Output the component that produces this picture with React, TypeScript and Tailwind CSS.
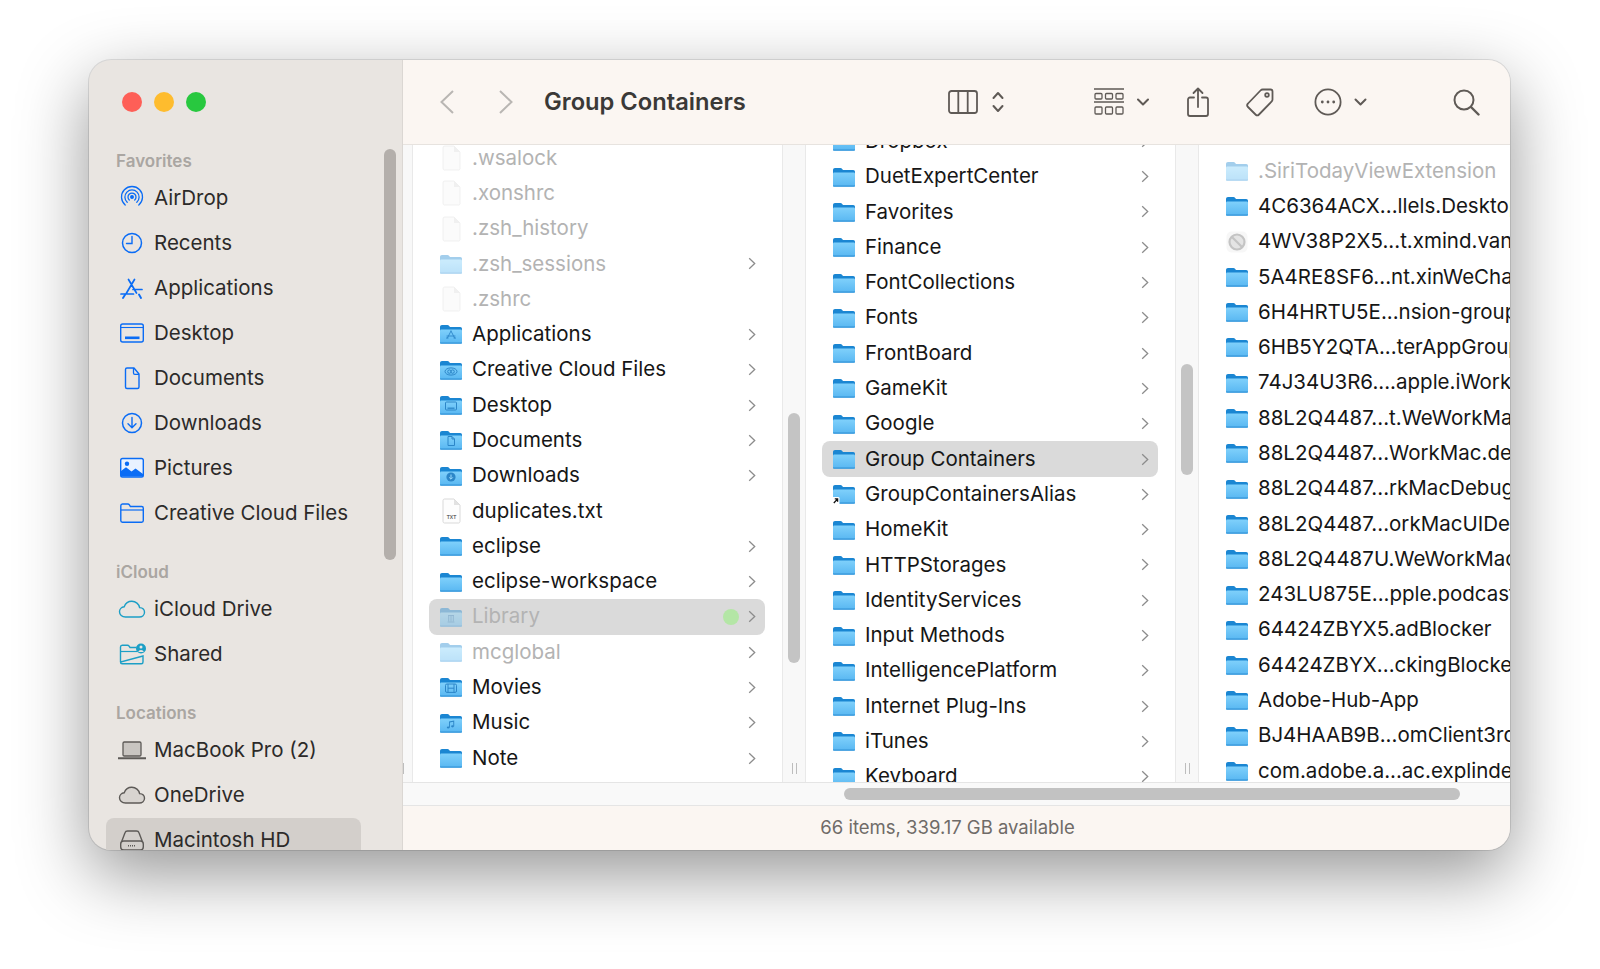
import React, { useId } from "react";

const FONT = "font-['Inter','Liberation_Sans',sans-serif]";

type G = "app" | "cc" | "desk" | "doc" | "down" | "lib" | "film" | "music" | "alias" | undefined;

function Glyph({ g }: { g: G }) {
  const c = "#2c86c8";
  if (g === "app") return <path d="M12 8l-3.6 7M12 8l3.6 7M8 13h8M7.5 15h1.6M15 15h1.6" stroke={c} strokeWidth="0.9" fill="none" strokeLinecap="round" />;
  if (g === "cc") return <g stroke={c} strokeWidth="1" fill="none"><ellipse cx="12" cy="12.5" rx="6" ry="3.6" /><circle cx="10.4" cy="12.6" r="1.7" /><circle cx="13.6" cy="12.6" r="1.7" /></g>;
  if (g === "desk") return <g stroke={c} strokeWidth="1" fill="none"><rect x="6.5" y="8" width="11" height="8" rx="1" /><path d="M8.5 14.2h7" strokeWidth="1.3" /></g>;
  if (g === "doc") return <path d="M9 7.5h4l2.5 2.5v6.5H9zM13 7.5V10h2.5" stroke={c} strokeWidth="1" fill="none" strokeLinejoin="round" />;
  if (g === "down") return <g><circle cx="12" cy="12" r="4.6" fill={c} /><path d="M12 9.5v4.4M10.2 12.4l1.8 1.8 1.8-1.8" stroke="#9adafc" strokeWidth="1" fill="none" /></g>;
  if (g === "lib") return <path d="M9 9.5h6M9.7 9.5v6M12 9.5v6M14.3 9.5v6M8.6 16h6.8" stroke={c} strokeWidth="1" fill="none" />;
  if (g === "film") return <g stroke={c} strokeWidth="1" fill="none"><rect x="6.5" y="8" width="11" height="8.4" rx="1.4" /><path d="M9 8v8.4M15 8v8.4M9 12.2h6" /></g>;
  if (g === "music") return <g fill={c}><path d="M10 9.6l5.2-1.2v5.8h-.9V9.8l-3.4.8v4.8H10z" /><ellipse cx="9.2" cy="15.5" rx="1.4" ry="1.1" /><ellipse cx="13.5" cy="14.3" rx="1.4" ry="1.1" /></g>;
  return null;
}

function Folder({ g, dim }: { g?: G; dim?: boolean }) {
  const id = useId();
  return (
    <svg width="24" height="22" viewBox="0 0 24 22" className={`shrink-0 ${dim ? "opacity-40" : ""}`}>
      <defs>
        <linearGradient id={id} x1="0" y1="0" x2="0" y2="1">
          <stop offset="0" stopColor="#7fd0fb" />
          <stop offset="1" stopColor="#5ab8f2" />
        </linearGradient>
      </defs>
      <path d="M1 4.2C1 2.9 1.8 2 3 2h5.4c.8 0 1.3.3 1.8.9L11 4h10.2C22.4 4 23 4.8 23 6v3H1z" fill="#1b86d2" />
      <rect x="1" y="5.6" width="22" height="14.9" rx="1.5" fill="#1b86d2" />
      <rect x="1" y="6.6" width="22" height="13.4" rx="1.2" fill={`url(#${id})`} />
      <rect x="1" y="19.3" width="22" height="1.4" rx="0.7" fill="#3f9fdf" />
      <Glyph g={g} />
      {g === "alias" && (
        <g>
          <rect x="0" y="14" width="7.5" height="7.5" rx="1.2" fill="#fff" />
          <path d="M1.8 20l3.4-3.6M2.8 15.9h2.8v2.8" stroke="#111" strokeWidth="1.3" fill="none" />
        </g>
      )}
    </svg>
  );
}

function FileIcon({ dim, txt }: { dim?: boolean; txt?: boolean }) {
  return (
    <svg width="24" height="26" viewBox="0 0 24 26" className="shrink-0">
      <path
        d="M4 2.5C4 1.7 4.6 1 5.5 1H15l6 6v16.5c0 .8-.6 1.5-1.5 1.5h-14C4.600 25 4 24.300 4 23.500z"
        fill={dim ? "#fbfbfb" : "#fdfdfd"}
        stroke={dim ? "#ededed" : "#cfcfcf"}
        strokeWidth="0.8"
      />
      <path d="M15 1v6h6z" fill={dim ? "#f0f0f0" : "#e2e2e2"} />
      {txt && (
        <text x="12.500" y="21" textAnchor="middle" fontSize="5" fontWeight="700" fill="#666" fontFamily="Liberation Sans">
          TXT
        </text>
      )}
    </svg>
  );
}

function Blocked() {
  return (
    <svg width="24" height="24" viewBox="0 0 24 24" className="shrink-0">
      <rect x="1.500" y="1.500" width="21" height="21" rx="5" fill="#f7f7f7" />
      <circle cx="12" cy="12" r="7.500" fill="#e4e4e4" stroke="#c4c4c4" strokeWidth="2.200" />
      <path d="M7 7l10 10" stroke="#c4c4c4" strokeWidth="2.200" />
    </svg>
  );
}

function Chevron() {
  return (
    <svg width="8" height="13" viewBox="0 0 8 13" className="shrink-0">
      <path d="M1.200 1.200L6.700 6.500 1.200 11.800" fill="none" stroke="#8c8c8c" strokeWidth="1.300" />
    </svg>
  );
}

type R = {
  n: string;
  t?: "file" | "txt" | "blocked";
  g?: G;
  dim?: boolean;
  chev?: boolean;
  sel?: boolean;
  dot?: boolean;
};

function Row({ r }: { r: R }) {
  return (
    <div
      className={`flex h-[35.3px] shrink-0 items-center rounded-[8px] pl-[10px] pr-[9px] ${r.sel ? "bg-[#dadada]" : ""}`}
    >
      <span className="flex w-[24px] shrink-0 justify-center">
        {r.t === "file" || r.t === "txt" ? <FileIcon dim={r.dim} txt={r.t === "txt"} /> : r.t === "blocked" ? <Blocked /> : <Folder g={r.g} dim={r.dim} />}
      </span>
      <span className={`ml-[9px] whitespace-nowrap text-[20.500px] ${r.dim ? "text-[#b3b3b3]" : "text-[#161616]"}`}>{r.n}</span>
      {(r.chev || r.dot) && <span className="flex-1" />}
      {r.dot && <span className="mr-[9px] h-[16px] w-[16px] rounded-full bg-[#b4e6a6]" />}
      {r.chev && <Chevron />}
    </div>
  );
}

const col1: R[] = [
  { n: ".wsalock", t: "file", dim: true },
  { n: ".xonshrc", t: "file", dim: true },
  { n: ".zsh_history", t: "file", dim: true },
  { n: ".zsh_sessions", dim: true, chev: true },
  { n: ".zshrc", t: "file", dim: true },
  { n: "Applications", g: "app", chev: true },
  { n: "Creative Cloud Files", g: "cc", chev: true },
  { n: "Desktop", g: "desk", chev: true },
  { n: "Documents", g: "doc", chev: true },
  { n: "Downloads", g: "down", chev: true },
  { n: "duplicates.txt", t: "txt" },
  { n: "eclipse", chev: true },
  { n: "eclipse-workspace", chev: true },
  { n: "Library", g: "lib", dim: true, chev: true, sel: true, dot: true },
  { n: "mcglobal", dim: true, chev: true },
  { n: "Movies", g: "film", chev: true },
  { n: "Music", g: "music", chev: true },
  { n: "Note", chev: true },
];

const col2: R[] = [
  "Dropbox",
  "DuetExpertCenter",
  "Favorites",
  "Finance",
  "FontCollections",
  "Fonts",
  "FrontBoard",
  "GameKit",
  "Google",
  "Group Containers",
  "GroupContainersAlias",
  "HomeKit",
  "HTTPStorages",
  "IdentityServices",
  "Input Methods",
  "IntelligencePlatform",
  "Internet Plug-Ins",
  "iTunes",
  "Keyboard",
].map((n) => ({ n, chev: true, sel: n === "Group Containers", g: n === "GroupContainersAlias" ? ("alias" as G) : undefined }));

const col3: R[] = [
  { n: ".SiriTodayViewExtension", dim: true },
  { n: "4C6364ACX...llels.Desktop" },
  { n: "4WV38P2X5...t.xmind.vana", t: "blocked" },
  { n: "5A4RE8SF6...nt.xinWeChat" },
  { n: "6H4HRTU5E...nsion-group" },
  { n: "6HB5Y2QTA...terAppGroup" },
  { n: "74J34U3R6....apple.iWork" },
  { n: "88L2Q4487...t.WeWorkMac" },
  { n: "88L2Q4487...WorkMac.dev" },
  { n: "88L2Q4487...rkMacDebug" },
  { n: "88L2Q4487...orkMacUIDev" },
  { n: "88L2Q4487U.WeWorkMac" },
  { n: "243LU875E...pple.podcast" },
  { n: "64424ZBYX5.adBlocker" },
  { n: "64424ZBYX...ckingBlocker" },
  { n: "Adobe-Hub-App" },
  { n: "BJ4HAAB9B...omClient3rd" },
  { n: "com.adobe.a...ac.explinder" },
];

function Handle({ one }: { one?: boolean }) {
  return (
    <div className="mb-[8px] mt-auto flex gap-[3px]">
      <span className="h-[11px] w-px bg-[#bdbdbd]" />
      {!one && <span className="h-[11px] w-px bg-[#bdbdbd]" />}
    </div>
  );
}

const B = "#0a6cf5";
const T = "#1c9fc6";
const Y = "#5d5a57";

const I = ({ children }: { children: React.ReactNode }) => (
  <svg width="28" height="28" viewBox="0 0 28 28" fill="none" className="shrink-0">
    {children}
  </svg>
);

const icons: Record<string, React.ReactNode> = {
  airdrop: (
    <I>
      <g stroke={B} strokeWidth="1.300" strokeLinecap="round">
        <circle cx="14" cy="13" r="1.300" fill={B} />
        <path d="M11.300 16a4 4 0 1 1 5.400 0" />
        <path d="M9.200 18.300a7.100 7.100 0 1 1 9.600 0" />
        <path d="M7.200 21a10.500 10.500 0 1 1 13.600 0" />
      </g>
    </I>
  ),
  recents: (
    <I>
      <circle cx="14" cy="14" r="9.500" stroke={B} strokeWidth="1.500" />
      <path d="M14 7.500V14.500H8.500" stroke={B} strokeWidth="1.400" strokeLinecap="round" />
    </I>
  ),
  apps: (
    <I>
      <path d="M11 4.500L19 18M17 4.500L9 18M3.500 19H16M15.500 14.500h9" stroke={B} strokeWidth="1.700" strokeLinecap="round" transform="translate(-0.500 1)" />
      <path d="M5 24l2.200-3.500M23 24l-2-3.500" stroke={B} strokeWidth="1.900" strokeLinecap="round" />
    </I>
  ),
  desktop: (
    <I>
      <rect x="2.700" y="5" width="22.600" height="18" rx="2" stroke={B} strokeWidth="1.400" />
      <path d="M3 8.500h22" stroke={B} strokeWidth="1.100" />
      <rect x="7" y="17.500" width="14.500" height="2.600" fill={B} />
    </I>
  ),
  docs: (
    <I>
      <path d="M7.500 5.500c0-.8.600-1.500 1.500-1.500h7l5 6v13c0 .8-.600 1.500-1.500 1.500H9c-.900 0-1.500-.700-1.500-1.500z" stroke={B} strokeWidth="1.400" strokeLinejoin="round" />
      <path d="M15.500 4v5c0 .800.500 1.300 1.300 1.300H21" stroke={B} strokeWidth="1.300" />
    </I>
  ),
  downloads: (
    <I>
      <circle cx="14" cy="14" r="9.500" stroke={B} strokeWidth="1.500" />
      <path d="M14 8.500v10M10 14.800l4 4 4-4" stroke={B} strokeWidth="1.400" strokeLinecap="round" strokeLinejoin="round" />
    </I>
  ),
  pictures: (
    <I>
      <rect x="2.700" y="4.500" width="22.600" height="18.500" rx="1.800" fill="#e9f2ff" stroke={B} strokeWidth="1.400" />
      <path d="M3 22.500v-5.500l5-3.800 5.500 4.300 4-3 7.500 5.500v2.500z" fill={B} />
      <circle cx="9" cy="9.800" r="2.200" fill={B} />
    </I>
  ),
  cc: (
    <I>
      <path d="M2.800 21.500V6.800C2.800 5.800 3.500 5 4.500 5h5.300c.7 0 1.200.300 1.600.900l1 1.600h11.300c1 0 1.600.700 1.600 1.700v12.300c0 1-.600 1.700-1.600 1.700H4.400c-1 0-1.600-.700-1.600-1.700z" stroke={B} strokeWidth="1.400" />
      <path d="M3 11h22" stroke={B} strokeWidth="1.200" />
    </I>
  ),
  icloud: (
    <I>
      <path d="M7.500 22C4 22 1.500 19.700 1.500 16.800c0-2.600 2-4.800 4.700-5C7.400 8.600 10.300 6.300 13.800 6.300c4 0 7.200 2.800 7.800 6.300 2.800.2 4.900 2.100 4.900 4.600 0 2.700-2.300 4.800-5.200 4.800z" stroke={T} strokeWidth="1.400" />
    </I>
  ),
  shared: (
    <I>
      <path d="M2.500 22V7c0-1 .700-1.800 1.700-1.800h5.300c.7 0 1.200.300 1.600.900L12 7.500h6.500M25 16v6c0 1-.600 1.800-1.600 1.800H4.200c-1 0-1.700-.800-1.700-1.800z" stroke={T} strokeWidth="1.400" />
      <path d="M2.700 11.500h16.300" stroke={T} strokeWidth="1.200" />
      <circle cx="23" cy="8.500" r="5" fill={T} />
      <circle cx="23" cy="7" r="1.500" fill="#e9e5e1" />
      <path d="M20.200 12a3 3 0 0 1 5.600 0z" fill="#e9e5e1" />
    </I>
  ),
  laptop: (
    <I>
      <rect x="5" y="6" width="18" height="14" rx="1.300" fill="#c9c5c1" stroke={Y} strokeWidth="1.300" />
      <path d="M0 22.300h28" stroke={Y} strokeWidth="2" strokeLinecap="round" />
    </I>
  ),
  onedrive: (
    <I>
      <path d="M7.500 22C4 22 1.500 19.700 1.500 16.800c0-2.600 2-4.800 4.700-5C7.400 8.600 10.300 6.300 13.800 6.300c4 0 7.200 2.800 7.800 6.300 2.800.2 4.900 2.100 4.900 4.600 0 2.700-2.300 4.800-5.200 4.800z" fill="#d8d4d0" stroke={Y} strokeWidth="1.400" />
    </I>
  ),
  hd: (
    <I>
      <path d="M3.500 16L7 6.800C7.400 5.600 8.300 5 9.500 5h9c1.200 0 2.100.6 2.500 1.800L24.500 16" stroke={Y} strokeWidth="1.400" />
      <rect x="2.700" y="15" width="22.600" height="9" rx="3" stroke={Y} strokeWidth="1.400" />
      <path d="M10 19.800h8" stroke={Y} strokeWidth="1.600" strokeDasharray="1 1" />
    </I>
  ),
};

function Side({ i, n, sel }: { i: string; n: string; sel?: boolean }) {
  return (
    <div className={`ml-[17px] flex h-[45px] w-[255px] shrink-0 items-center rounded-t-[8px] pl-[12px] ${sel ? "bg-[#d3cfcb]" : ""}`}>
      {icons[i]}
      <span className="ml-[8px] whitespace-nowrap text-[20.500px] text-[#2c2a29]">{n}</span>
    </div>
  );
}

function Label({ n, first }: { n: string; first?: boolean }) {
  return (
    <div className={`ml-[27px] h-[20px] shrink-0 text-[17px] font-semibold leading-[20px] text-[#aaa6a2] ${first ? "mt-[39px]" : "mt-[26.5px]"} mb-[4.500px]`}>{n}</div>
  );
}

const S = { stroke: "#5f5a56", fill: "none" as const };

export default function App() {
  return (
    <div className={`${FONT} h-[969px] w-[1600px] overflow-hidden bg-white pl-[89px] pt-[60px]`}>
      <div className="relative flex h-[790px] w-[1421px] overflow-hidden rounded-[22px] bg-[#e9e5e1] shadow-[0_24px_70px_0_rgba(0,0,0,0.42)] ring-1 ring-black/10">
        {/* Sidebar */}
        <aside className="flex w-[314px] shrink-0 flex-col overflow-hidden border-r border-[#dbd7d3]">
          <div className="ml-[33px] mt-[32px] flex shrink-0 gap-[12px]">
            <span className="h-[20px] w-[20px] rounded-full bg-[#fe5f57]" />
            <span className="h-[20px] w-[20px] rounded-full bg-[#febc2e]" />
            <span className="h-[20px] w-[20px] rounded-full bg-[#28c83f]" />
          </div>
          <Label n="Favorites" first />
          <Side i="airdrop" n="AirDrop" />
          <Side i="recents" n="Recents" />
          <Side i="apps" n="Applications" />
          <Side i="desktop" n="Desktop" />
          <Side i="docs" n="Documents" />
          <Side i="downloads" n="Downloads" />
          <Side i="pictures" n="Pictures" />
          <Side i="cc" n="Creative Cloud Files" />
          <Label n="iCloud" />
          <Side i="icloud" n="iCloud Drive" />
          <Side i="shared" n="Shared" />
          <Label n="Locations" />
          <Side i="laptop" n="MacBook Pro (2)" />
          <Side i="onedrive" n="OneDrive" />
          <Side i="hd" n="Macintosh HD" sel />
        </aside>
        <div className="absolute left-[295px] top-[89px] h-[411px] w-[12px] rounded-full bg-[#b4afab]" />

        {/* Main */}
        <main className="flex min-w-0 flex-1 flex-col bg-[#fbf6f2]">
          <header className="flex h-[85px] shrink-0 items-center border-b border-[#e7e3df] pl-[37px]">
            <svg width="14" height="24" viewBox="0 0 14 24" className="shrink-0">
              <path d="M13 1L1.500 12 13 23" fill="none" stroke="#b9b6b3" strokeWidth="2" />
            </svg>
            <svg width="14" height="24" viewBox="0 0 14 24" className="ml-[45px] shrink-0">
              <path d="M1 1l11.500 11L1 23" fill="none" stroke="#b9b6b3" strokeWidth="2" />
            </svg>
            <div className="ml-[31px] w-[201px] shrink-0 whitespace-nowrap text-[23.700px] font-semibold text-[#3a3937]">Group Containers</div>
            <svg width="30" height="24" viewBox="0 0 30 24" className="ml-[203px] shrink-0" {...S} strokeWidth="1.800">
              <rect x="1" y="1" width="28" height="22" rx="2.500" />
              <path d="M10.300 1v22M19.700 1v22" />
            </svg>
            <svg width="12" height="22" viewBox="0 0 12 22" className="ml-[14px] shrink-0" {...S} strokeWidth="2" strokeLinecap="round" strokeLinejoin="round">
              <path d="M1.500 7L6 2l4.500 5M1.500 15L6 20l4.500-5" />
            </svg>
            <svg width="30" height="28" viewBox="0 0 30 28" className="ml-[90px] shrink-0" {...S} strokeWidth="1.300">
              <path d="M0 1h30M0 14h30" strokeWidth="1.700" />
              <rect x="1" y="5.500" width="7" height="5.500" rx="1" />
              <rect x="11.500" y="5.500" width="7" height="5.500" rx="1" />
              <rect x="22" y="5.500" width="7" height="5.500" rx="1" />
              <rect x="1" y="19" width="7" height="7" rx="1" />
              <rect x="11.500" y="19" width="7" height="7" rx="1" />
              <rect x="22" y="19" width="7" height="7" rx="1" />
            </svg>
            <svg width="12" height="8" viewBox="0 0 12 8" className="ml-[13px] shrink-0" {...S} strokeWidth="2" strokeLinecap="round" strokeLinejoin="round">
              <path d="M1 1.500l5 5 5-5" />
            </svg>
            <svg width="22" height="30" viewBox="0 0 22 30" className="ml-[38px] shrink-0" {...S} strokeWidth="1.800" strokeLinecap="round" strokeLinejoin="round">
              <path d="M7 10.500H3C1.800 10.500 1 11.300 1 12.500v14.500c0 1.200.8 2 2 2h16c1.200 0 2-.8 2-2V12.500c0-1.200-.8-2-2-2h-4M11 20V1.500M6.500 6L11 1.500 15.500 6" />
            </svg>
            <svg width="30" height="30" viewBox="0 0 30 30" className="ml-[36px] shrink-0" {...S} strokeWidth="1.800" strokeLinejoin="round">
              <path d="M3 16.500L15.500 3.500c.6-.6 1.300-1 2.200-1h7.800c1.200 0 2 .8 2 2v8c0 .9-.4 1.600-1 2.200L14 27.500c-1 1-2.500 1-3.500 0L3 20c-1-1-1-2.500 0-3.500z" />
              <circle cx="22" cy="8" r="1.800" />
            </svg>
            <svg width="28" height="28" viewBox="0 0 28 28" className="ml-[39px] shrink-0" {...S} strokeWidth="1.800">
              <circle cx="14" cy="14" r="12.600" />
              <circle cx="8.300" cy="14" r="1.400" fill="#5f5a56" stroke="none" />
              <circle cx="14" cy="14" r="1.400" fill="#5f5a56" stroke="none" />
              <circle cx="19.700" cy="14" r="1.400" fill="#5f5a56" stroke="none" />
            </svg>
            <svg width="13" height="8" viewBox="0 0 13 8" className="ml-[12px] shrink-0" {...S} strokeWidth="2" strokeLinecap="round" strokeLinejoin="round">
              <path d="M1.500 1.500l5 5 5-5" />
            </svg>
            <svg width="27" height="27" viewBox="0 0 27 27" className="ml-[86px] shrink-0" {...S} strokeWidth="2" strokeLinecap="round">
              <circle cx="11" cy="11" r="9.500" />
              <path d="M18 18l7.500 7.500" strokeWidth="2.400" />
            </svg>
          </header>

          <div className="flex min-h-0 flex-1 bg-white">
            <div className="flex w-[9px] shrink-0 flex-col bg-[#f8f8f8]">
              <Handle one />
            </div>
            <div className="w-[371px] shrink-0 overflow-hidden border-l border-r border-[#e9e9e9] pl-[16px] pr-[17px]">
              <div className="mt-[-4.650px] flex flex-col">
                {col1.map((r) => (
                  <Row key={r.n} r={r} />
                ))}
              </div>
            </div>
            <div className="flex w-[22px] shrink-0 flex-col items-center bg-[#f8f8f8]">
              <div className="mt-[268px] h-[250px] w-[12px] rounded-full bg-[#c4c4c4]" />
              <Handle />
            </div>
            <div className="w-[371px] shrink-0 overflow-hidden border-l border-r border-[#e9e9e9] pl-[16px] pr-[17px]">
              <div className="mt-[-21.300px] flex flex-col">
                {col2.map((r) => (
                  <Row key={r.n} r={r} />
                ))}
              </div>
            </div>
            <div className="flex w-[22px] shrink-0 flex-col items-center bg-[#f8f8f8]">
              <div className="mt-[219px] h-[111px] w-[12px] rounded-full bg-[#c4c4c4]" />
              <Handle />
            </div>
            <div className="min-w-0 flex-1 overflow-hidden border-l border-[#e9e9e9] pl-[16px]">
              <div className="mt-[8.350px] flex flex-col">
                {col3.map((r) => (
                  <Row key={r.n} r={r} />
                ))}
              </div>
            </div>
          </div>

          <div className="flex h-[24px] shrink-0 items-center border-b border-t border-[#e5e5e5] bg-[#f9f9f9] pl-[441px]">
            <div className="h-[12px] w-[616px] rounded-full bg-[#c2c2c2]" />
          </div>
          <div className="flex h-[44px] shrink-0 items-center justify-center pr-[18px] text-[18.500px] text-[#6f6b68]">66 items, 339.17 GB available</div>
        </main>
      </div>
    </div>
  );
}
